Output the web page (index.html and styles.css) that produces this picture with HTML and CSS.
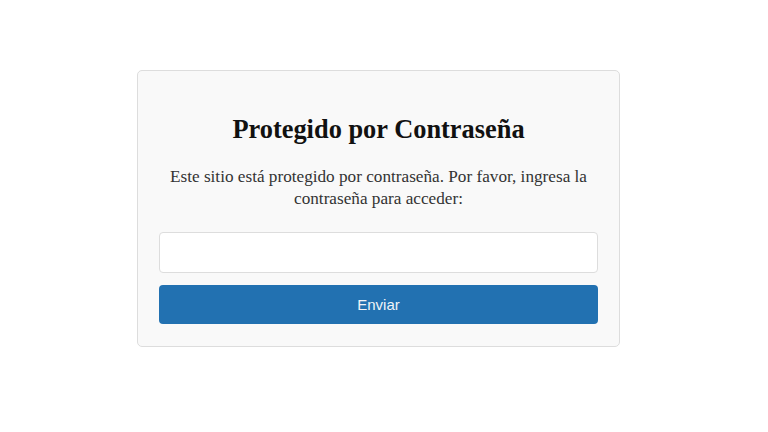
FILE: index.html
```html
<!DOCTYPE html>
<html lang="es">
<head>
    <meta charset="UTF-8">
    <meta name="viewport" content="width=device-width, initial-scale=1.0">
    <title>Protegido por Contraseña</title>
    <link rel="stylesheet" href="styles.css">
</head>
<body>
    <div class="password-box">
        <h1>Protegido por Contraseña</h1>
        <p>Este sitio está protegido por contraseña. Por favor, ingresa la contraseña para acceder:</p>
        <form class="password-form">
            <input type="password" name="password" required>
            <button type="submit">Enviar</button>
        </form>
    </div>
</body>
</html>
```

FILE: styles.css
```css
body {
    font-family: "Liberation Serif", "Times New Roman", serif;
    background-color: #fff;
    margin: 0;
    padding: 70px 0 0 137px;
    color: #222;
}
.password-box {
    width: 439px;
    background-color: #f9f9f9;
    border: 1px solid #ddd;
    border-radius: 5px;
    padding: 22px 21px 22px 21px;
    text-align: center;
}
h1 {
    font-size: 26.4px;
    line-height: 30px;
    margin: 21px 0 22px 0;
    color: #111;
}
p {
    font-size: 17.2px;
    line-height: 22px;
    margin: 0 0 22px 0;
    color: #333;
}
.password-form {
    display: flex;
    flex-direction: column;
    gap: 12px;
}
input[type="password"] {
    height: 41px;
    padding: 0 10px;
    border: 1px solid #ddd;
    border-radius: 4px;
    background-color: #fff;
    box-sizing: border-box;
    font-size: 16px;
}
button {
    height: 39px;
    background-color: #2271b1;
    color: #f0f4f8;
    border: none;
    border-radius: 4px;
    font-family: "Liberation Sans", Arial, sans-serif;
    font-size: 15px;
    cursor: pointer;
}
button:hover {
    background-color: #135e96;
}
```
